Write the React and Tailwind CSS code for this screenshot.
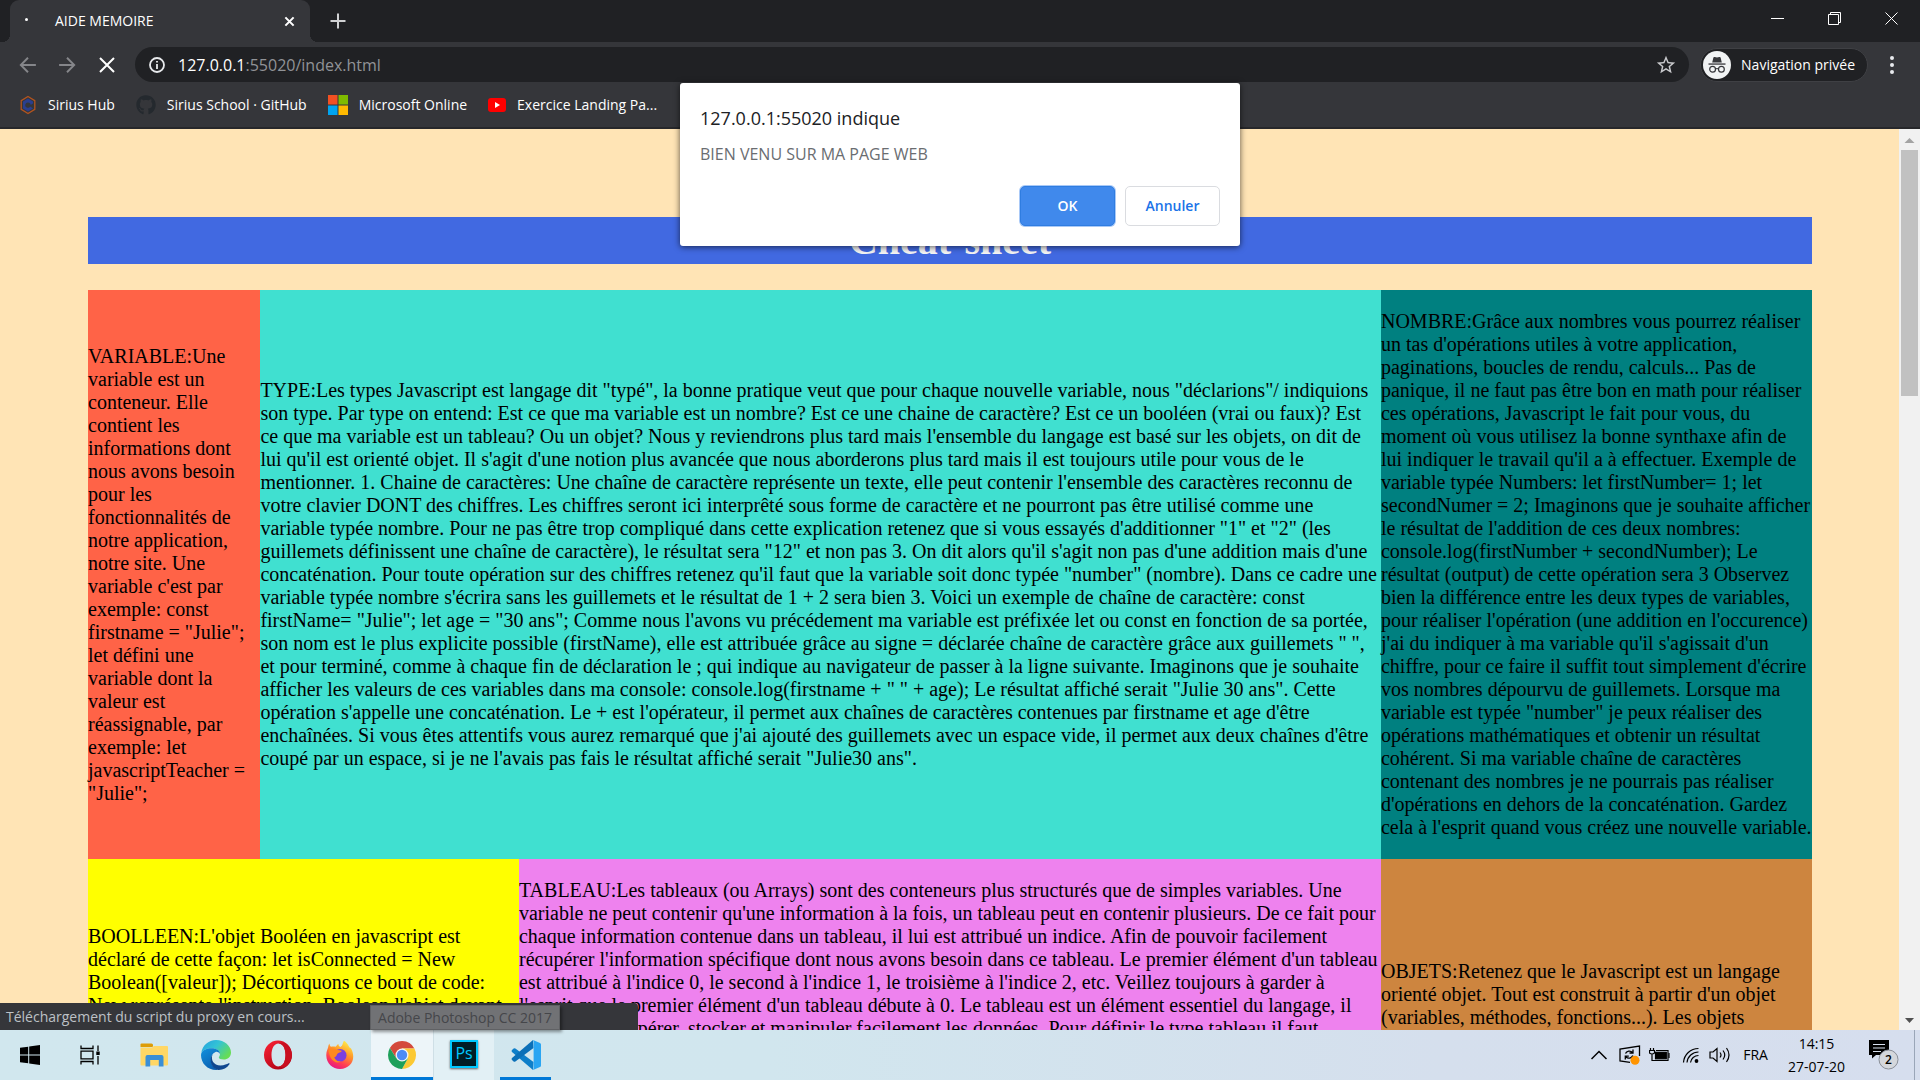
import React from "react";
import { FaGithub } from "react-icons/fa";

const UI = "font-['Open_Sans','Noto_Sans',sans-serif]";

/* ---------- Browser chrome icons ---------- */

function Stroke({ className, children, width = 2, box = 16 }) {
  return (
    <svg viewBox={`0 0 ${box} ${box}`} className={className} fill="none" stroke="currentColor" strokeWidth={width} aria-hidden="true">
      {children}
    </svg>
  );
}

function SiriusIcon() {
  return (
    <svg viewBox="0 0 18 20" className="h-5 w-[18px]" fill="none" aria-hidden="true">
      <path d="M9 1.5 15.8 5.6V14.4L9 18.5 2.2 14.4V5.6Z" stroke="#b3541e" strokeWidth="1.3" />
      <path d="M9 3.4 14 6.4V8.6L11.6 10 9 8 6.6 9.4V11.4L9 12.8 11.4 11.4 14 13.4 9 16.6 4 13.6V6.4Z" fill="#2a3f8f" />
      <circle cx="9" cy="10" r="2.6" fill="#35363a" />
    </svg>
  );
}

function MicrosoftIcon() {
  return (
    <svg viewBox="0 0 20 20" className="size-5" aria-hidden="true">
      <rect width="9.5" height="9.5" fill="#f25022" />
      <rect x="10.5" width="9.5" height="9.5" fill="#7fba00" />
      <rect y="10.5" width="9.5" height="9.5" fill="#00a4ef" />
      <rect x="10.5" y="10.5" width="9.5" height="9.5" fill="#ffb900" />
    </svg>
  );
}

function YoutubeIcon() {
  return (
    <svg viewBox="0 0 18 14" className="h-[14px] w-[18px]" aria-hidden="true">
      <rect width="18" height="14" rx="3" fill="#f00" />
      <path d="M7 4 12 7 7 10Z" fill="#fff" />
    </svg>
  );
}

function IncognitoIcon() {
  return (
    <span className="flex size-7 items-center justify-center rounded-full bg-[#f1f3f4]">
      <svg viewBox="0 0 18 18" className="size-[18px]" aria-hidden="true">
        <path d="M4.2 6.6 5.4 1.6Q5.7 .6 6.8 1L9 1.6 11.2 1Q12.3.6 12.6 1.6L13.8 6.6Z" fill="#35363a" />
        <rect x="0.5" y="7.4" width="17" height="1.3" fill="#35363a" />
        <g fill="none" stroke="#35363a" strokeWidth="1.2">
          <circle cx="4.6" cy="13.2" r="2.9" />
          <circle cx="13.4" cy="13.2" r="2.9" />
          <path d="M7.4 13.1Q9 11.9 10.6 13.1" />
        </g>
      </svg>
    </span>
  );
}

/* ---------- Browser chrome ---------- */

function TabStrip() {
  return (
    <div className="flex h-[42px] items-stretch bg-[#202124] pl-[10px] text-white">
      <div className="relative flex w-[300px] items-center rounded-t-[9px] bg-[#35363a] pl-[15px] pr-[13px] before:absolute before:bottom-0 before:-left-2 before:size-2 before:bg-[radial-gradient(circle_at_top_left,transparent_8px,#35363a_8px)] after:absolute after:bottom-0 after:-right-2 after:size-2 after:bg-[radial-gradient(circle_at_top_right,transparent_8px,#35363a_8px)]">
        <span className="mb-1 size-[3px] rounded-full bg-white" />
        <span className="ml-[27px] flex-1 text-sm">AIDE MEMOIRE</span>
        <button aria-label="Fermer l'onglet" className="flex size-4 items-center justify-center">
          <Stroke className="size-[11px]" width={3}><path d="M2 2 14 14M14 2 2 14" /></Stroke>
        </button>
      </div>
      <button aria-label="Nouvel onglet" className="ml-5 flex w-4 items-center justify-center text-[#d0d1d3]">
        <Stroke className="size-4"><path d="M8 .5V15.5M.5 8H15.5" /></Stroke>
      </button>
      <div className="ml-auto flex pb-[6px]">
        <button aria-label="Réduire" className="flex w-[57px] items-center justify-center">
          <Stroke className="size-[13px]" width={1} box={13}><path d="M0 6.5H13" /></Stroke>
        </button>
        <button aria-label="Restaurer" className="flex w-[57px] items-center justify-center">
          <Stroke className="size-[13px]" width={1} box={13}><path d="M.5 2.5H10.5V12.5H.5ZM2.5 2.5V.5H12.5V10.5H10.5" /></Stroke>
        </button>
        <button aria-label="Fermer" className="flex w-[57px] items-center justify-center">
          <Stroke className="size-[13px]" width={1} box={13}><path d="M.5.5 12.5 12.5M12.5.5.5 12.5" /></Stroke>
        </button>
      </div>
    </div>
  );
}

function Toolbar() {
  return (
    <div className="flex h-[45px] items-center bg-[#35363a] pl-[19px] text-white">
      <button aria-label="Retour" className="flex w-[18px] justify-center text-[#85868a]">
        <Stroke className="size-[18px]"><path d="M15 8H2M8 1.6 1.6 8 8 14.4" strokeWidth="1.7" /></Stroke>
      </button>
      <button aria-label="Avancer" className="ml-[21px] flex w-[18px] justify-center text-[#85868a]">
        <Stroke className="size-[18px]"><path d="M1 8H14M8 1.6 14.4 8 8 14.4" strokeWidth="1.7" /></Stroke>
      </button>
      <button aria-label="Arrêter" className="ml-[23px] flex w-4 justify-center">
        <Stroke className="size-4"><path d="M1 1 15 15M15 1 1 15" /></Stroke>
      </button>
      <div className="ml-5 flex h-[35px] flex-1 items-center rounded-full bg-[#202124] pr-3 pl-3.5">
        <Stroke className="size-4 shrink-0 text-[#e8eaed]">
          <circle cx="8" cy="8" r="7" strokeWidth="1.8" />
          <path d="M8 7V12M8 4V5.6" strokeWidth="1.8" />
        </Stroke>
        <label className="ml-[13px] flex flex-1 items-center text-base">
          <span>127.0.0.1</span>
          <input aria-label="Adresse" defaultValue=":55020/index.html" className="min-w-0 flex-1 bg-transparent text-[#919397] outline-none" />
        </label>
        <button aria-label="Ajouter aux favoris">
          <svg viewBox="0 0 24 24" className="size-[22px]" fill="#c9cacd" aria-hidden="true">
            <path d="M22 9.24l-7.19-.62L12 2 9.19 8.63 2 9.24l5.46 4.73L5.82 21 12 17.27 18.18 21l-1.63-7.03L22 9.24zM12 15.4l-3.76 2.27 1-4.28-3.32-2.88 4.38-.38L12 6.1l1.71 4.04 4.38.38-3.32 2.88 1 4.28L12 15.4z" />
          </svg>
        </button>
      </div>
      <button className="ml-[11px] flex h-[34px] items-center gap-2.5 rounded-full border border-[#3f4044] bg-[#202124] pr-3 pl-0.5 text-sm">
        <IncognitoIcon />
        Navigation privée
      </button>
      <button aria-label="Menu" className="mr-[18px] ml-[14px] flex w-5 flex-col items-center gap-[3px]">
        <span className="size-1 rounded-full bg-[#e8eaed]" />
        <span className="size-1 rounded-full bg-[#e8eaed]" />
        <span className="size-1 rounded-full bg-[#e8eaed]" />
      </button>
    </div>
  );
}

function Bookmark({ icon, children }) {
  return (
    <a href="#" className="flex items-center gap-[11px]">
      {icon}
      <span>{children}</span>
    </a>
  );
}

function Bookmarks() {
  return (
    <nav aria-label="Favoris" className="flex h-[42px] items-center gap-[21px] border-b-2 border-[#27282b] bg-[#35363a] pb-1 pl-[19px] text-sm text-white">
      <Bookmark icon={<SiriusIcon />}>Sirius Hub</Bookmark>
      <Bookmark icon={<FaGithub className="size-5 text-[#24292e]" />}>Sirius School · GitHub</Bookmark>
      <Bookmark icon={<MicrosoftIcon />}>Microsoft Online</Bookmark>
      <Bookmark icon={<YoutubeIcon />}>Exercice Landing Pa...</Bookmark>
    </nav>
  );
}

function AlertDialog() {
  return (
    <div role="alertdialog" aria-labelledby="alert-title" aria-describedby="alert-text" className={`${UI} absolute top-[83px] left-1/2 flex w-[560px] -translate-x-1/2 flex-col rounded-[3px] bg-white p-5 shadow-[0_1px_6px_rgba(0,0,0,0.65)]`}>
      <h2 id="alert-title" className="mt-[3px] text-lg leading-6 text-[#202124]">127.0.0.1:55020 indique</h2>
      <p id="alert-text" className="mt-3 text-base leading-6 text-[#6a6d71]">BIEN VENU SUR MA PAGE WEB</p>
      <div className="mt-5 flex justify-end gap-2.5 text-sm font-semibold">
        <button className="h-10 w-[95px] rounded-[5px] border border-[#2f7de1] bg-[#4089ec] text-white shadow-[0_0_0_1px_#a9c9f7]">OK</button>
        <button className="h-10 w-[95px] rounded-[5px] border border-[#dadce0] bg-white text-[#1a73e8]">Annuler</button>
      </div>
    </div>
  );
}

/* ---------- Page content ---------- */

const cards = [
  {
    box: "items-center bg-[#ff6347]",
    text: `VARIABLE:Une variable est un conteneur. Elle contient les informations dont nous avons besoin pour les fonctionnalités de notre application, notre site. Une variable c'est par exemple: const firstname = "Julie"; let défini une variable dont la valeur est réassignable, par exemple: let javascriptTeacher = "Julie";`,
  },
  {
    box: "col-span-2 items-center bg-[#40e0d0]",
    text: `TYPE:Les types Javascript est langage dit "typé", la bonne pratique veut que pour chaque nouvelle variable, nous "déclarions"/ indiquions son type. Par type on entend: Est ce que ma variable est un nombre? Est ce une chaine de caractère? Est ce un booléen (vrai ou faux)? Est ce que ma variable est un tableau? Ou un objet? Nous y reviendrons plus tard mais l'ensemble du langage est basé sur les objets, on dit de lui qu'il est orienté objet. Il s'agit d'une notion plus avancée que nous aborderons plus tard mais il est toujours utile pour vous de le mentionner. 1. Chaine de caractères: Une chaîne de caractère représente un texte, elle peut contenir l'ensemble des caractères reconnu de votre clavier DONT des chiffres. Les chiffres seront ici interprêté sous forme de caractère et ne pourront pas être utilisé comme une variable typée nombre. Pour ne pas être trop compliqué dans cette explication retenez que si vous essayés d'additionner "1" et "2" (les guillemets définissent une chaîne de caractère), le résultat sera "12" et non pas 3. On dit alors qu'il s'agit non pas d'une addition mais d'une concaténation. Pour toute opération sur des chiffres retenez qu'il faut que la variable soit donc typée "number" (nombre). Dans ce cadre une variable typée nombre s'écrira sans les guillemets et le résultat de 1 + 2 sera bien 3. Voici un exemple de chaîne de caractère: const firstName= "Julie"; let age = "30 ans"; Comme nous l'avons vu précédement ma variable est préfixée let ou const en fonction de sa portée, son nom est le plus explicite possible (firstName), elle est attribuée grâce au signe = déclarée chaîne de caractère grâce aux guillemets " ", et pour terminé, comme à chaque fin de déclaration le ; qui indique au navigateur de passer à la ligne suivante. Imaginons que je souhaite afficher les valeurs de ces variables dans ma console: console.log(firstname + " " + age); Le résultat affiché serait "Julie 30 ans". Cette opération s'appelle une concaténation. Le + est l'opérateur, il permet aux chaînes de caractères contenues par firstname et age d'être enchaînées. Si vous êtes attentifs vous aurez remarqué que j'ai ajouté des guillemets avec un espace vide, il permet aux deux chaînes d'être coupé par un espace, si je ne l'avais pas fais le résultat affiché serait "Julie30 ans".`,
  },
  {
    box: "items-center bg-[#008080]",
    text: `NOMBRE:Grâce aux nombres vous pourrez réaliser un tas d'opérations utiles à votre application, paginations, boucles de rendu, calculs... Pas de panique, il ne faut pas être bon en math pour réaliser ces opérations, Javascript le fait pour vous, du moment où vous utilisez la bonne synthaxe afin de lui indiquer le travail qu'il a à effectuer. Exemple de variable typée Numbers: let firstNumber= 1; let secondNumer = 2; Imaginons que je souhaite afficher le résultat de l'addition de ces deux nombres: console.log(firstNumber + secondNumber); Le résultat (output) de cette opération sera 3 Observez bien la différence entre les deux types de variables, pour réaliser l'opération (une addition en l'occurence) j'ai du indiquer à ma variable qu'il s'agissait d'un chiffre, pour ce faire il suffit tout simplement d'écrire vos nombres dépourvu de guillemets. Lorsque ma variable est typée "number" je peux réaliser des opérations mathématiques et obtenir un résultat cohérent. Si ma variable chaîne de caractères contenant des nombres je ne pourrais pas réaliser d'opérations en dehors de la concaténation. Gardez cela à l'esprit quand vous créez une nouvelle variable.`,
  },
  {
    box: "col-span-2 bg-[#ffff00] pt-[46px]",
    text: `BOOLLEEN:L'objet Booléen en javascript est déclaré de cette façon: let isConnected = New Boolean([valeur]); Décortiquons ce bout de code: New représente l'instruction, Boolean l'objet devant`,
  },
  {
    box: "bg-[#ee82ee]",
    text: `TABLEAU:Les tableaux (ou Arrays) sont des conteneurs plus structurés que de simples variables. Une variable ne peut contenir qu'une information à la fois, un tableau peut en contenir plusieurs. De ce fait pour chaque information contenue dans un tableau, il lui est attribué un indice. Afin de pouvoir facilement récupérer l'information spécifique dont nous avons besoin dans ce tableau. Le premier élément d'un tableau est attribué à l'indice 0, le second à l'indice 1, le troisième à l'indice 2, etc. Veillez toujours à garder à l'esprit que le premier élément d'un tableau débute à 0. Le tableau est un élément essentiel du langage, il permet de récupérer, stocker et manipuler facilement les données. Pour définir le type tableau il faut`,
  },
  {
    box: "bg-[#cd853f] pt-[81px]",
    text: `OBJETS:Retenez que le Javascript est un langage orienté objet. Tout est construit à partir d'un objet (variables, méthodes, fonctions...). Les objets`,
  },
];

function Page() {
  return (
    <main className="flex-1 overflow-hidden bg-[#ffe4b5] pr-[87px] pl-[88px] pt-[88px] font-['Liberation_Serif',serif] text-xl leading-[23px] text-black">
      <h1 className="mb-[26px] bg-[#4169e1] text-center text-[40px] leading-[47px] font-bold text-[#f5f5f5]">Cheat-sheet</h1>
      <div className="grid grid-cols-[10%_15%_50%_25%]">
        {cards.map((card) => (
          <article key={card.text} className={`flex ${card.box}`}>
            <p className="my-5">{card.text}</p>
          </article>
        ))}
      </div>
    </main>
  );
}

function Scrollbar() {
  return (
    <div className="flex w-[21px] shrink-0 flex-col items-center bg-[#f1f1f1]">
      <svg viewBox="0 0 21 21" className="size-[21px]" aria-hidden="true"><path d="M5.5 14 10.5 9 15.5 14Z" fill="#a3a3a3" /></svg>
      <div className="h-[246px] w-[17px] bg-[#c1c1c1]" />
      <svg viewBox="0 0 21 21" className="mt-auto size-[21px]" aria-hidden="true"><path d="M6 9 10.5 14 15 9Z" fill="#505050" /></svg>
    </div>
  );
}

/* ---------- Taskbar ---------- */

function WindowsLogo() {
  return (
    <svg viewBox="0 0 20 20" className="size-5" aria-hidden="true">
      <path d="M0 2.8 8.2 1.7V9.5H0ZM9.2 1.5 20 0V9.5H9.2ZM0 10.5H8.2V18.3L0 17.2ZM9.2 10.5H20V20L9.2 18.5Z" />
    </svg>
  );
}

function TaskView() {
  return (
    <svg viewBox="0 0 20 20" className="size-5" fill="none" stroke="#000" strokeWidth="1.3" aria-hidden="true">
      <path d="M1 .5V3.5H13V.5M1 19.5V16.5H13V19.5M1 6.2H13V13.8H1ZM18 .5V6M18 11V19.5" />
      <path d="M18 6.5V10" strokeWidth="3.4" />
    </svg>
  );
}

function FolderIcon() {
  return (
    <svg viewBox="0 0 28 24" className="h-6 w-7" aria-hidden="true">
      <path d="M.5 1.5Q.5.5 1.5.5H11.5Q13 .5 13 2V3Q13 4 12 4H.5Z" fill="#dd9c07" />
      <path d="M.5 4.5H12L14 3H27Q28 3 28 4V21.5Q28 22.5 27 22.5H1.5Q.5 22.5.5 21.5Z" fill="#ffd765" />
      <path d="M5.5 23.5V14Q5.5 12 7.5 12H21.5Q23.5 12 23.5 14V23.5H18.8V17H10.2V23.5Z" fill="#3a8fd6" />
    </svg>
  );
}

function EdgeIcon() {
  return (
    <svg viewBox="0 0 30 30" className="size-[30px]" aria-hidden="true">
      <defs>
        <linearGradient id="edge-top" x1="0" y1="0" x2="1" y2="0.6">
          <stop offset="0" stopColor="#259fe0" />
          <stop offset="0.5" stopColor="#33c3d6" />
          <stop offset="1" stopColor="#66dd55" />
        </linearGradient>
        <linearGradient id="edge-left" x1="0" y1="0" x2="0.6" y2="1">
          <stop offset="0" stopColor="#1391de" />
          <stop offset="1" stopColor="#0a5fb0" />
        </linearGradient>
      </defs>
      <path d="M.3 13C1.3 5.5 7.5 0 15 0 23.5 0 30 6 30 12.5 30 17 26.5 19.5 22.8 19.5 19.5 19.5 17.8 18.5 17.8 17.5 17.8 16.7 19 16 19 14 19 10.5 15 8.3 10.5 8.3 5.5 8.3 1.5 10.5.3 13Z" fill="url(#edge-top)" />
      <path d="M0 15C.3 10.5 5 8.3 10.5 8.3 15.5 8.3 19 10.5 19 14 17.8 12 15.8 11.5 14.5 12 11 13.5 9.5 17 10 21 10.5 25 13.5 28.5 17.5 29.8 7.5 31 0 24 0 15Z" fill="url(#edge-left)" />
      <path d="M11.5 14.5C9.5 19.5 12.5 25.5 19.5 25.5 23.5 25.5 26 24 27.5 23.3 28.3 22.9 28.9 23.5 28.4 24.3 26 28 22 30 17.5 29.9 13 29 9.5 25 9.6 20 9.7 17.5 10.5 15.5 11.5 14.5Z" fill="#10478f" />
    </svg>
  );
}

function OperaIcon() {
  return (
    <svg viewBox="0 0 30 30" className="size-[30px]" aria-hidden="true">
      <defs>
        <linearGradient id="opera-ring" x1="0" y1="0" x2="0.8" y2="1">
          <stop offset="0" stopColor="#ff2436" />
          <stop offset="1" stopColor="#a50012" />
        </linearGradient>
      </defs>
      <path fillRule="evenodd" d="M15 .5A14 14.5 0 0 1 29 15 14 14.5 0 0 1 15 29.5 14 14.5 0 0 1 1 15 14 14.5 0 0 1 15 .5ZM15.5 3.5C11 3.5 8.5 8.5 8.5 15S11 26.5 15.5 26.5 22.5 21.5 22.5 15 20 3.5 15.5 3.5Z" fill="url(#opera-ring)" />
      <path d="M15.5 3.5C18.5 1.8 21.5 2.2 24 4.2 30.5 10.5 30.5 19.5 24.3 25.5 21.5 28 18 28.2 15.5 26.5 20 26.5 22.5 21.5 22.5 15S20 3.5 15.5 3.5Z" fill="#c90f20" />
    </svg>
  );
}

function FirefoxIcon() {
  return (
    <svg viewBox="0 0 30 30" className="size-[30px]" aria-hidden="true">
      <defs>
        <linearGradient id="fox-body" x1="0.8" y1="0" x2="0.3" y2="1">
          <stop offset="0" stopColor="#fff44f" />
          <stop offset="0.4" stopColor="#ff9a28" />
          <stop offset="0.75" stopColor="#ff3a55" />
          <stop offset="1" stopColor="#e31587" />
        </linearGradient>
      </defs>
      <path d="M19 .8C22.5 3 23.5 6 24.5 7.5 25.5 7.7 26 8.5 26.3 9 31 18 27 28.5 15 29 7.5 29 1.5 23.5 1.3 15.5 1.2 11 2.8 9 3.2 7 3.4 5.5 3.8 4.5 4.5 3.5 4.5 5 5 6 6 6.8 7.5 6.3 9 6.3 10.5 6.8 12 5.5 12 4.5 13.5 4 13.3 5.5 14 6.5 15.5 7 18 5.5 17.5 3 19 .8Z" fill="url(#fox-body)" />
      <circle cx="15.2" cy="15.3" r="6.3" fill="#7a3fe0" />
      <path d="M3.5 10C6 8 9 8 11.5 9.5 13.5 10.5 15.5 10 17 11 15 13 12.5 12.8 12 14.5 11.5 16.5 9.5 17.5 9 17 10 20 12.5 22 16 21.5 10.5 24.5 4.5 20 3.5 10Z" fill="#ff8a1e" />
    </svg>
  );
}

function ChromeIcon() {
  return (
    <svg viewBox="0 0 28 28" className="size-7" aria-hidden="true">
      <path d="M14 7.5H26.4A14 14 0 0 0 1.88 7L8.3 17.2Z" fill="#d4493c" />
      <path d="M14 7.5H26.4A14 14 0 0 1 14 28L19.8 17.5Z" fill="#fcc934" />
      <path d="M8.3 17.2 1.88 7A14 14 0 0 0 14 28L19.8 17.5Z" fill="#1ea05a" />
      <circle cx="14" cy="14" r="6.5" fill="#f4f6f6" />
      <circle cx="14" cy="14" r="5.2" fill="#4c8bf5" />
    </svg>
  );
}

function PhotoshopIcon() {
  return (
    <span className="flex size-7 items-center justify-center border-2 border-[#00c8ff] bg-[#001d26] pb-0.5 text-base leading-none text-[#00c8ff] shadow-[0_1px_2px_rgba(0,0,0,0.6)]">Ps</span>
  );
}

function CodeIcon() {
  return (
    <svg viewBox="0 0 30 30" className="size-[30px]" aria-hidden="true">
      <path d="M22 30 1 12Q0 11 1 10L2.600 8.600Q3.500 8 4.400 8.600L22.500 22Z" fill="#0f7fc9" />
      <path d="M22 0 1 18Q0 19 1 20L2.600 21.400Q3.500 22 4.400 21.400L22.500 8Z" fill="#0b70b8" />
      <path d="M22 0 29 3Q30 3.500 30 4.500V25.500Q30 26.500 29 27L22 30Q22.600 29 22.600 28V2Q22.600 1 22 0Z" fill="#2aa5f2" />
    </svg>
  );
}

const apps = [
  { name: "Démarrer", icon: <WindowsLogo />, box: "w-[60px]" },
  { name: "Affichage des tâches", icon: <TaskView />, box: "w-[60px]" },
  { name: "Explorateur de fichiers", icon: <FolderIcon />, box: "ml-[3px] w-[62px]" },
  { name: "Microsoft Edge", icon: <EdgeIcon />, box: "w-[62px]" },
  { name: "Opera", icon: <OperaIcon />, box: "w-[62px]" },
  { name: "Firefox", icon: <FirefoxIcon />, box: "w-[62px]" },
  { name: "Google Chrome", icon: <ChromeIcon />, box: "w-[62px] border-b-3 border-b-[#0078d7] pt-[3px] bg-[#edf5f9]" },
  { name: "Adobe Photoshop", icon: <PhotoshopIcon />, box: "w-[61px] border-l border-l-[#cfdfe6] bg-[#e2f0f5] pb-0.5" },
  { name: "Visual Studio Code", icon: <CodeIcon />, box: "mx-[6px] w-[51px] border-b-3 border-b-[#0078d7] pt-[3px]" },
];

function Tray() {
  return (
    <div className="ml-auto flex items-center text-black">
      <button aria-label="Afficher les icônes cachées">
        <Stroke className="size-4" width={1.5}><path d="M.5 12 8 4.5 15.5 12" /></Stroke>
      </button>
      <svg viewBox="0 0 22 20" className="ml-3 h-5 w-[22px]" fill="none" stroke="#000" strokeWidth="1.3" aria-hidden="true">
        <path d="M11 17.3 1 16V4L20.5 1V11" />
        <path d="M6.5 8.5A4 3.6 0 0 1 13.5 7.5M14 4.5V8H10.5M13.8 10.5A4 3.6 0 0 1 7 12M6.3 14.5V11.2H9.8" />
        <circle cx="16" cy="15.2" r="4.5" fill="#ff9400" stroke="none" />
      </svg>
      <svg viewBox="0 0 21 16" className="ml-2 h-4 w-[21px]" fill="none" stroke="#000" strokeWidth="1.2" aria-hidden="true">
        <path d="M4 13.500H19V3.500H7" />
        <rect x="6.5" y="5.300" width="10.8" height="6.500" fill="#000" />
        <path d="M20 6V11M1.5 1V3.5M4.5 1V3.5M.5 3.5H5.5V6Q3 8 .5 6ZM3 7V13.5H6" />
      </svg>
      <svg viewBox="0 0 18 18" className="ml-3 size-[18px]" fill="none" stroke="#000" strokeWidth="1.2" aria-hidden="true">
        <path d="M1.5 16.5A15 15 0 0 1 16.5 2.5M5 16.5A11.5 11.5 0 0 1 16.5 6M8.5 16.5A8 8 0 0 1 16.5 9.5" />
        <circle cx="14.5" cy="15" r="1.9" fill="#000" stroke="none" />
      </svg>
      <svg viewBox="0 0 22 18" className="ml-[9px] h-[18px] w-[22px]" fill="none" stroke="#000" strokeWidth="1.2" aria-hidden="true">
        <path d="M1 6H4L8 2.5V15.5L4 12H1ZM11 6.5Q13 9 11 11.5M14 4.5Q17.5 9 14 13.5M17.5 2Q22.5 9 17.5 16" />
      </svg>
      <span className="ml-3 text-sm">FRA</span>
      <div className="ml-5 flex flex-col text-center text-sm leading-[23px]">
        <span>14:15</span>
        <span>27-07-20</span>
      </div>
      <button aria-label="Notifications" className="relative mr-[15px] ml-6 h-[30px] w-[30px]">
        <svg viewBox="0 0 30 30" className="size-[30px]" aria-hidden="true">
          <path d="M0 0H20V15H7L3 18.5V15H0Z" />
          <path d="M4 4.5H16M4 8H16M4 11.5H12" stroke="#d6dfee" strokeWidth="1.2" />
          <circle cx="19.5" cy="19.5" r="9.5" fill="#d4d7dc" stroke="#8a8f98" />
        </svg>
        <span className="absolute right-0 bottom-0 w-[21px] text-center text-xs leading-[21px] font-semibold">2</span>
      </button>
      <span className="h-[50px] w-1.5 border-l border-[#9aa6b8]" />
    </div>
  );
}

function Taskbar() {
  return (
    <footer className="flex h-[50px] shrink-0 bg-[linear-gradient(90deg,#d1e7ee_0%,#d1e6ee_40%,#d5dfed_75%,#d6deee_100%)]">
      {apps.map((app) => (
        <button key={app.name} aria-label={app.name} className={`flex items-center justify-center ${app.box}`}>
          {app.icon}
        </button>
      ))}
      <Tray />
    </footer>
  );
}

export default function App() {
  return (
    <div className={`${UI} relative flex h-screen flex-col overflow-hidden`}>
      <header className="shrink-0">
        <TabStrip />
        <Toolbar />
        <Bookmarks />
      </header>
      <div className="relative flex min-h-0 flex-1">
        <Page />
        <Scrollbar />
        <div className="absolute bottom-0 left-0 flex h-[27px] w-[638px] items-center rounded-tr-[4px] bg-[#35363a] pl-1.5 text-sm text-[#bdc1c6]">
          <span>Téléchargement du script du proxy en cours...</span>
          <span role="tooltip" className="absolute top-0.5 left-[370px] flex h-[25px] w-[190px] items-center justify-center border border-[#606164] bg-[#717275] text-[#45464a] shadow-[2px_2px_3px_rgba(0,0,0,0.4)]">Adobe Photoshop CC 2017</span>
        </div>
      </div>
      <Taskbar />
      <AlertDialog />
    </div>
  );
}
